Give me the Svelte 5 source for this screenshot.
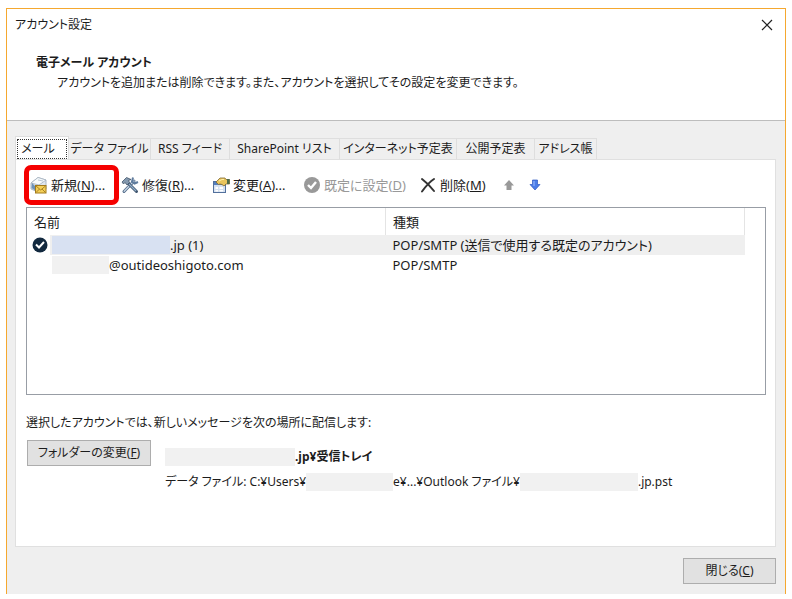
<script>
    const tabs = [
        { label: 'メール', width: 54 },
        { label: 'データ ファイル', width: 82 },
        { label: 'RSS フィード', width: 79 },
        { label: 'SharePoint リスト', width: 110 },
        { label: 'インターネット予定表', width: 117 },
        { label: '公開予定表', width: 78 },
        { label: 'アドレス帳', width: 62 },
    ];

    const tools = [
        { id: 'new', label: '新規', key: 'N', more: true, width: 95 },
        { id: 'repair', label: '修復', key: 'R', more: true, width: 91 },
        { id: 'change', label: '変更', key: 'A', more: true, width: 91 },
        { id: 'default', label: '既定に設定', key: 'D', disabled: true, width: 116 },
        { id: 'delete', label: '削除', key: 'M', width: 84 },
    ];

    let active = 0;
</script>

<div class="dialog">
    <header class="header">
        <div class="titlebar">
            <span>アカウント設定</span>
            <button class="titlebar__close" aria-label="閉じる">
                <svg width="12" height="12" viewBox="0 0 12 12"><path d="M1 1L11 11M11 1L1 11" stroke="#222" stroke-width="1.2" fill="none"/></svg>
            </button>
        </div>
        <h1>電子メール アカウント</h1>
        <p>アカウントを追加または削除できます。また、アカウントを選択してその設定を変更できます。</p>
    </header>

    <main class="body">
        <div class="tabs" role="tablist">
            {#each tabs as tab, i}
                <button class="tab" class:tab--active={i === active} role="tab" aria-selected={i === active} style="width:{tab.width}px" on:click={() => active = i}><span>{tab.label}</span></button>
            {/each}
        </div>

        <section class="panel">
            <div class="toolbar">
                {#each tools as tool}
                    <button class="tool" class:tool--marked={tool.id === 'new'} disabled={tool.disabled} style="width:{tool.width}px">
                        <svg width="18" height="18" viewBox="0 0 18 18">
                            {#if tool.id === 'new'}
                                <path d="M1 7L8 1.500L16 4V13L8 16L1 13Z" fill="#dfe6ee" stroke="#9aa8b8" stroke-width=".8"/>
                                <path d="M1 7L8 1.500L16 4L9 9Z" fill="#f7fafc" stroke="#a5b1bf" stroke-width=".8"/>
                                <path d="M2 7L6 11V15L1.500 12Z" fill="#6d92b8"/>
                                <path d="M8 4L13 5" stroke="#b9c7d4"/>
                                <rect x="5.500" y="9.500" width="10.500" height="7.500" fill="#f4cf58" stroke="#a27a1c"/>
                                <path d="M6 10L10.700 14L15.500 10M6 16.500L9.500 13M15.500 16.500L12 13" fill="none" stroke="#a27a1c" stroke-width=".9"/>
                            {:else if tool.id === 'repair'}
                                <path d="M3 15.500L13 5" stroke="#526b89" stroke-width="3" stroke-linecap="round"/>
                                <path d="M3.200 15.300L13 5" stroke="#c3d3e3" stroke-width="1.400" stroke-linecap="round"/>
                                <path d="M12 1.500L11 5.500L13.500 7.500L17 6" fill="none" stroke="#607c9d" stroke-width="2"/>
                                <path d="M7 7L15.500 15.500" stroke="#41566f" stroke-width="3" stroke-linecap="round"/>
                                <path d="M8 8L15 15" stroke="#90aeca" stroke-width="1.200"/>
                                <path d="M1 6L5.500 1.500L10 3.500L7.500 4.500L8.500 6.500L6 9L4 6.500L2.500 8Z" fill="#8398ae" stroke="#40536a" stroke-width=".8"/>
                            {:else if tool.id === 'change'}
                                <rect x="1.500" y="5.500" width="12" height="11" fill="#d5e1f1" stroke="#52709c"/>
                                <path d="M2 6H13V9H2Z" fill="#547fbd"/>
                                <path d="M3.500 11H6V13H3.500ZM7.500 11H11V13H7.500ZM3.500 14H6V15.500H3.500ZM7.500 14H11V15.500H7.500Z" fill="#fff"/>
                                <path d="M4 6L8 2H13L14 3.500H17.500V8H14L12 10L10 8.500L8 8L6.500 8.500Z" fill="#e9c55e" stroke="#806a32" stroke-width=".8"/>
                                <path d="M7 5L10 3.500H12" stroke="#fff0a8" fill="none"/>
                                <path d="M15 3H17.500V8H15Z" fill="#4d6b48"/>
                            {:else if tool.id === 'default'}
                                <circle cx="9" cy="9" r="8" fill="#999"/>
                                <path d="M5 9L8 12L13 6" fill="none" stroke="#fff" stroke-width="2.400"/>
                            {:else}
                                <path d="M3 3C7 6 11 10 15 15M15 3C10 6 7 10 3 15.500" fill="none" stroke="#333" stroke-width="2" stroke-linecap="round"/>
                            {/if}
                        </svg>
                        <span>{tool.label}(<u>{tool.key}</u>){tool.more ? '...' : ''}</span>
                    </button>
                {/each}
                <button class="arrow" disabled aria-label="上へ">
                    <svg width="12" height="12" viewBox="0 0 12 12"><path d="M6 1L11 6.500H8.500V11H3.500V6.500H1Z" fill="#999"/></svg>
                </button>
                <button class="arrow" aria-label="下へ">
                    <svg width="12" height="12" viewBox="0 0 12 12"><path d="M6 11L11 5.500H8.500V1H3.500V5.500H1Z" fill="#4b7de8" stroke="#2c58c0" stroke-width=".7"/><path d="M5 2V7" stroke="#9dbcff"/></svg>
                </button>
            </div>

            <div class="list">
                <table>
                    <thead>
                        <tr><th class="name">名前</th><th>種類</th></tr>
                    </thead>
                    <tbody>
                        <tr class="selected">
                            <td class="name">
                                <div class="account">
                                    <span class="account__mark">
                                        <svg width="16" height="16" viewBox="0 0 16 16"><circle cx="8" cy="8" r="7.500" fill="#12293f"/><path d="M4 7.500L7 10.500L12 5" fill="none" stroke="#fff" stroke-width="2"/></svg>
                                    </span>
                                    <span class="mask mask--blue"></span>
                                    <span>.jp (1)</span>
                                </div>
                            </td>
                            <td>POP/SMTP (送信で使用する既定のアカウント)</td>
                        </tr>
                        <tr>
                            <td class="name">
                                <div class="account">
                                    <span class="account__mark"></span>
                                    <span class="mask mask--user"></span>
                                    <span>@outideoshigoto.com</span>
                                </div>
                            </td>
                            <td>POP/SMTP</td>
                        </tr>
                    </tbody>
                </table>
            </div>

            <p class="note">選択したアカウントでは、新しいメッセージを次の場所に配信します:</p>
            <div class="delivery">
                <button class="button button--folder">フォルダーの変更(<u>F</u>)</button>
                <div class="paths">
                    <div class="path path--bold"><span class="mask mask--box"></span>.jp¥受信トレイ</div>
                    <div class="path">データ ファイル: C:¥Users¥<span class="mask mask--dir"></span>e¥...¥Outlook ファイル¥<span class="mask mask--file"></span>.jp.pst</div>
                </div>
            </div>
        </section>

        <footer class="footer">
            <button class="button button--close">閉じる(<u>C</u>)</button>
        </footer>
    </main>
</div>

<style>
    :global(body) {
        background: #fff;
    }

    .dialog {
        margin: 8px 6px 0;
        border: 1px solid #f5a82f;
        border-bottom: 0;
        color: #1c1c1c;
        font-family: "Noto Sans", "Noto Sans CJK JP", sans-serif;
        font-size: 12px;
        line-height: 20px;
        font-feature-settings: "palt";
        white-space: nowrap;
    }

    button {
        padding: 0;
        border: 0;
        background: none;
        color: inherit;
        font: inherit;
        font-feature-settings: inherit;
        white-space: nowrap;
    }

    h1, p {
        margin: 0;
        font-size: 12px;
    }

    .header {
        height: 112px;
        box-sizing: border-box;
        border-bottom: 1px solid #bdbdbd;
    }

    .titlebar {
        display: flex;
        align-items: center;
        justify-content: space-between;
        height: 32px;
        padding: 0 12px 0 8px;
    }

    .titlebar__close {
        display: flex;
    }

    .header h1 {
        margin-top: 12px;
        padding-left: 29px;
    }

    .header p {
        padding-left: 50px;
    }

    .body {
        padding: 15px 9px 10px 8px;
        background: #efefef;
    }

    .tabs {
        display: flex;
        align-items: flex-end;
    }

    .tab {
        box-sizing: border-box;
        height: 21px;
        border: 1px solid #dedede;
        border-width: 1px 1px 0 0;
    }

    .tab--active {
        height: 23px;
        padding: 1px 1px 0 1px;
        border-left-width: 1px;
        background: #fff;
    }

    .tab--active span {
        display: block;
        border: 1px dotted #333;
        padding-right: 8px;
        line-height: 18px;
    }

    .panel {
        padding: 5px 9px 0 9px;
        height: 388px;
        box-sizing: border-box;
        border: 1px solid #e0e0e0;
        background: #fff;
    }

    .toolbar {
        display: flex;
        align-items: center;
        height: 40px;
        margin-left: -1px;
        font-size: 13px;
    }

    .tool {
        display: flex;
        align-items: center;
        gap: 3px;
        flex-shrink: 0;
        box-sizing: border-box;
    }

    .tool--marked {
        height: 40px;
        padding-left: 1px;
        border: 5px solid #f50000;
        border-radius: 7px;
        margin-right: 2px;
    }

    .tool:disabled {
        color: #999;
    }

    .arrow {
        display: flex;
        margin-right: 14px;
    }

    .list {
        height: 188px;
        box-sizing: border-box;
        margin: 2px 0 0 1px;
        padding-right: 20px;
        border: 1px solid #989da5;
    }

    table {
        width: 100%;
        table-layout: fixed;
        border-collapse: collapse;
        font-size: 13px;
    }

    th, td {
        padding: 0 0 0 7px;
        text-align: left;
        font-weight: normal;
    }

    th {
        height: 27px;
        border-right: 1px solid #e4e4e4;
    }

    td {
        height: 20px;
    }

    .name {
        width: 351px;
    }

    td.name {
        padding-left: 5px;
    }

    .selected {
        background: linear-gradient(90deg, #fff 23px, #efefef 23px);
    }

    .account {
        display: flex;
        align-items: center;
    }

    .account__mark {
        display: flex;
        width: 20px;
    }

    .mask {
        display: inline-block;
        height: 18px;
        background: #f1f1f1;
        vertical-align: middle;
    }

    .mask--blue {
        width: 118px;
        background: #d8e1f2;
    }

    .mask--user {
        width: 57px;
    }

    .mask--box {
        width: 130px;
    }

    .mask--dir {
        width: 87px;
    }

    .mask--file {
        width: 118px;
    }

    .note {
        margin: 18px 0 7px 1px;
    }

    .delivery {
        display: flex;
        align-items: flex-start;
        gap: 14px;
        margin-left: 2px;
    }

    .button {
        box-sizing: border-box;
        height: 26px;
        border: 1px solid #adadad;
        background: #e1e1e1;
    }

    .button--folder {
        width: 124px;
    }

    .button--close {
        width: 93px;
    }

    .paths {
        padding-top: 4px;
    }

    .path {
        display: flex;
        align-items: center;
        height: 25px;
        white-space: pre;
    }

    .path--bold {
        font-weight: bold;
    }

    .footer {
        display: flex;
        justify-content: flex-end;
        padding-top: 11px;
    }
</style>
